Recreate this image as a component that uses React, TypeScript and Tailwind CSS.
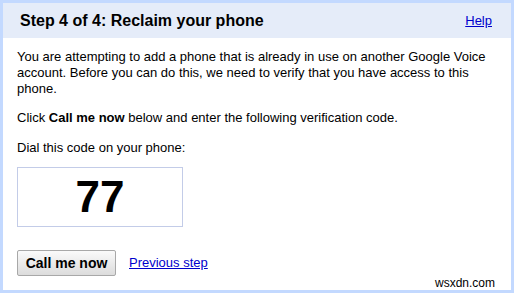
export default function App() {
  return (
    <div
      className="relative h-[293px] w-[514px] border-[3px] border-[#c3d9ff] bg-white text-black"
      style={{ fontFamily: '"Liberation Sans", Arial, sans-serif' }}
    >
      <div className="flex h-[35px] items-center justify-between bg-[#e5ecf9] pl-[17px] pr-[19px]">
        <h1 className="text-[16px] font-bold">Step 4 of 4: Reclaim your phone</h1>
        <a href="#" className="text-[13px] text-[#0000cc] underline">
          Help
        </a>
      </div>

      <div className="pl-[14px] pr-[10px] pt-[11px] text-[13px] leading-[16px]">
        <p>
          You are attempting to add a phone that is already in use on another Google Voice
          account. Before you can do this, we need to verify that you have access to this
          phone.
        </p>
        <p className="mt-[13px]">
          Click <b>Call me now</b> below and enter the following verification code.
        </p>
        <p className="mt-[14px]">Dial this code on your phone:</p>

        <div className="mt-[11px] flex h-[60px] w-[166px] items-center justify-center border border-[#c3cce8]">
          <span className="text-[44px] font-bold leading-none">77</span>
        </div>

        <div className="mt-[23px] flex items-center gap-[13px]">
          <button
            type="button"
            className="h-[26px] w-[99px] rounded-[2px] border border-[#a8a8a8] bg-gradient-to-b from-[#fafafa] to-[#dcdcdc] text-[14px] font-bold"
          >
            Call me now
          </button>
          <a href="#" className="text-[13px] text-[#0000cc] underline">
            Previous step
          </a>
        </div>
      </div>

      <span className="absolute bottom-[-2px] right-[16px] text-[12px] text-black">wsxdn.com</span>
    </div>
  );
}
